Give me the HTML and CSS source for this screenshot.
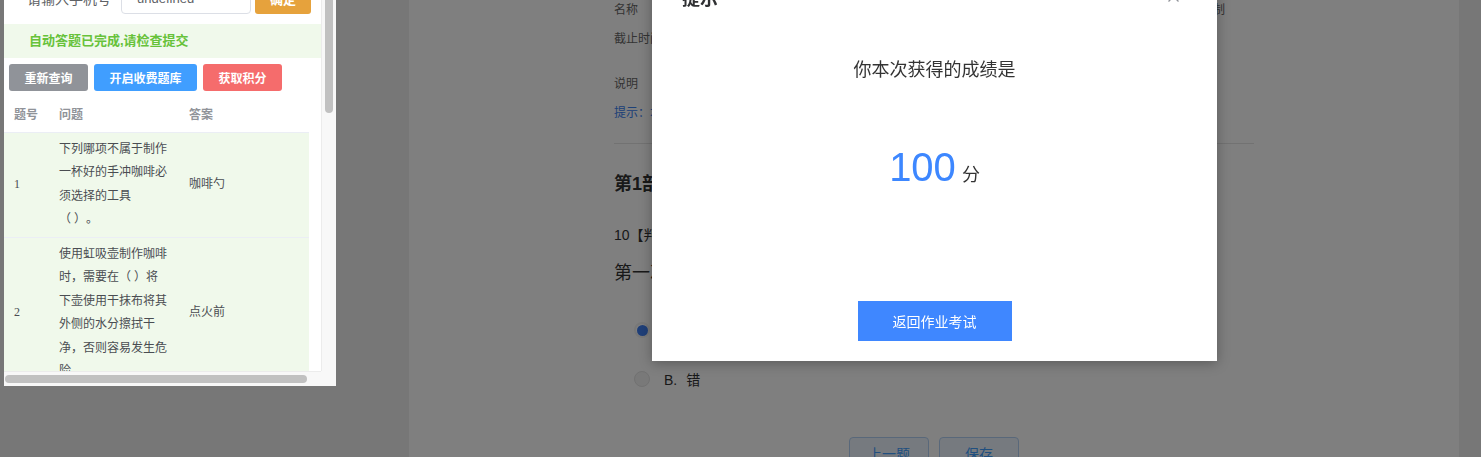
FILE: index.html
```html
<!DOCTYPE html>
<html lang="zh-CN">
<head>
<meta charset="utf-8">
<title>作业考试</title>
<link rel="stylesheet" href="styles.css">
</head>
<body>
<div class="page">
  <main class="sheet">
    <div class="content">
      <div class="info-row">
        <div class="info-left"><span class="k">名称</span><span class="v">咖啡制作基础</span></div>
        <span class="info-right">考试次数：不限制</span>
      </div>
      <div class="info-row row-gap1">
        <div class="info-left"><span class="k">截止时间</span><span class="v">2023-06-30 23:59</span></div>
      </div>
      <div class="info-row row-gap2">
        <div class="info-left"><span class="k">说明</span><span class="v">请认真作答</span></div>
      </div>
      <div class="tip">提示：本次考试共10题，提交后不可修改。</div>
      <hr class="divider">
      <h2 class="part">第1部分 判断题</h2>
      <div class="q-no">10【判断题】(10分)</div>
      <div class="q-title">第一次冲泡手冲咖啡前需要先温杯。</div>
      <div class="options">
        <div class="opt"><span class="radio checked"></span><span class="opt-text"><span class="opt-key">A.</span>对</span></div>
        <div class="opt"><span class="radio"></span><span class="opt-text"><span class="opt-key">B.</span>错</span></div>
      </div>
      <div class="nav-btns">
        <button class="plain-btn">上一题</button>
        <button class="plain-btn">保存</button>
      </div>
    </div>
  </main>
</div>

<div class="mask"></div>

<aside class="helper">
  <div class="helper-body">
    <div class="phone-row">
      <span class="phone-label">请输入手机号</span>
      <input class="phone-input" value="undefined">
      <button class="btn btn-warning">确定</button>
    </div>
    <div class="alert">自动答题已完成,请检查提交</div>
    <div class="btn-row">
      <button class="btn btn-info">重新查询</button>
      <button class="btn btn-primary">开启收费题库</button>
      <button class="btn btn-danger">获取积分</button>
    </div>
    <table class="qa">
      <colgroup><col class="c1"><col class="c2"><col class="c3"></colgroup>
      <thead>
        <tr><th>题号</th><th>问题</th><th>答案</th></tr>
      </thead>
      <tbody>
        <tr><td>1</td><td>下列哪项不属于制作一杯好的手冲咖啡必须选择的工具（&nbsp;）。</td><td>咖啡勺</td></tr>
        <tr><td>2</td><td>使用虹吸壶制作咖啡时，需要在（&nbsp;）将下壶使用干抹布将其外侧的水分擦拭干净，否则容易发生危险。</td><td>点火前</td></tr>
        <tr><td>3</td><td>意式浓缩咖啡的萃取时间一般为（&nbsp;）。</td><td>25-30秒</td></tr>
      </tbody>
    </table>
  </div>
  <div class="vtrack"><div class="vthumb"></div></div>
  <div class="htrack"><div class="hthumb"></div></div>
  <div class="corner"></div>
</aside>

<section class="dialog">
  <header class="dialog-head">
    <span class="dialog-title">提示</span>
    <svg class="dialog-close" width="11" height="11" viewBox="0 0 11 11"><path d="M0.5 0.5 L10.5 10.5 M10.5 0.5 L0.5 10.5" stroke="#909399" stroke-width="1.3" fill="none"/></svg>
  </header>
  <p class="dialog-text">你本次获得的成绩是</p>
  <div class="score"><span class="score-num">100</span><span class="score-unit">分</span></div>
  <div class="dialog-foot"><button class="back-btn">返回作业考试</button></div>
</section>
</body>
</html>
```

FILE: styles.css
```css
* { box-sizing: border-box; text-spacing-trim: space-all; }
html, body { margin: 0; padding: 0; }
body {
  width: 1481px;
  height: 457px;
  overflow: hidden;
  background: #eeeeee;
  font-family: "Liberation Sans", "Noto Sans CJK SC", sans-serif;
}
button { font-family: inherit; border: 0; cursor: pointer; }

/* underlying page */
.page { display: flex; height: 457px; }
.sheet {
  margin-left: 409px;
  width: 1050px;
  height: 100%;
  background: #ffffff;
  padding-left: 205px;
}
.content { width: 640px; }
.info-row {
  display: flex;
  justify-content: space-between;
  line-height: 20px;
  font-size: 12px;
  color: #666;
  padding-right: 29px;
}
.row-gap1 { margin-top: 9px; }
.row-gap2 { margin-top: 25px; }
.info-left { display: flex; }
.k { width: 60px; }
.v { color: #333; }
.info-right { color: #666; }
.tip { margin-top: 9px; line-height: 20px; font-size: 12px; color: #3a82f0; }
.divider { margin: 20px 0 0; border: 0; border-top: 1px solid #e4e4e4; height: 0; }
.part { margin: 28px 0 0; font-size: 18px; line-height: 24px; font-weight: bold; color: #333; }
.q-no { margin-top: 29px; font-size: 14px; line-height: 20px; color: #333; }
.q-title { margin-top: 16px; font-size: 18px; line-height: 24px; color: #333; }
.options { margin-top: 30px; padding-left: 20px; display: flex; flex-direction: column; gap: 19px; }
.opt { display: flex; align-items: center; height: 30px; font-size: 14px; color: #333; }
.radio {
  width: 16px; height: 16px; border-radius: 50%;
  border: 1px solid #e2e2e2; background: #f2f2f2;
  display: flex; align-items: center; justify-content: center;
}
.radio.checked { border: 2px solid #f0f0f0; background: #ffffff; }
.radio.checked::after { content: ""; width: 11px; height: 11px; border-radius: 50%; background: #3f7ef0; }
.opt-text { margin-left: 14px; }
.opt-key { margin-right: 9px; }
.nav-btns { margin-top: 43px; display: flex; justify-content: center; gap: 10px; }
.plain-btn {
  width: 80px; height: 32px; border-radius: 4px;
  background: #ecf5ff; border: 1px solid #b3d0f5; color: #409eff; font-size: 14px;
}

/* overlay */
.mask { position: fixed; inset: 0; background: rgba(0, 0, 0, 0.5); }

/* helper panel */
.helper {
  position: fixed;
  left: 4px;
  top: -18px;
  width: 332px;
  height: 404px;
  background: #ffffff;
  display: grid;
  grid-template-columns: 317px 15px;
  grid-template-rows: 389px 15px;
}
.helper-body { overflow: hidden; }
.phone-row { display: flex; align-items: center; height: 32px; padding-left: 23px; }
.phone-label { width: 94px; font-size: 14px; color: #606266; }
.phone-input {
  width: 130px; height: 32px; border: 1px solid #dcdfe6; border-radius: 4px;
  padding: 0 15px; font-size: 13px; color: #606266; font-family: inherit; outline: none;
}
.btn { color: #fff; border-radius: 3px; font-size: 12px; font-weight: bold; }
.btn-warning { margin-left: 4px; width: 56px; height: 32px; background: #e6a23c; font-size: 13px; }
.alert {
  margin-top: 10px; height: 34px; line-height: 34px; padding-left: 25px;
  background: #f0f9eb; color: #67c23a; font-size: 13px; font-weight: bold;
}
.btn-row { margin-top: 6px; display: flex; gap: 6px; padding-left: 5px; }
.btn-row .btn { height: 27px; }
.btn-info { width: 79px; background: #909399; }
.btn-primary { width: 103px; background: #409eff; }
.btn-danger { width: 79px; background: #f56c6c; }

.qa { margin-top: 5px; width: 305px; table-layout: fixed; border-collapse: collapse; }
.c1 { width: 45px; }
.c2 { width: 130px; }
.c3 { width: 130px; }
.qa th {
  height: 36px; padding: 0 10px; text-align: left; vertical-align: middle;
  font-size: 12px; font-weight: bold; color: #909399; border-bottom: 1px solid #ebeef5;
}
.qa td {
  padding: 5px 10px; line-height: 23.5px; vertical-align: middle;
  font-family: "Liberation Serif", "Noto Sans CJK SC", serif;
  font-size: 12px; color: #4a4d52; background: #f0f9eb; border-bottom: 1px solid #ebeef5;
}

.vtrack { background: #f8f8f8; border-left: 1px solid #ececec; padding: 2px 3px 0; }
.vthumb { width: 8px; height: 129px; border-radius: 4px; background: #c1c1c1; }
.htrack { background: #f8f8f8; border-top: 1px solid #ececec; padding: 3px 0 0 1px; }
.hthumb { width: 302px; height: 8px; border-radius: 4px; background: #c1c1c1; }
.corner { background: #f8f8f8; }

/* dialog */
.dialog {
  position: fixed;
  left: 652px;
  top: -30px;
  width: 565px;
  background: #ffffff;
  box-shadow: 0 2px 12px rgba(0, 0, 0, 0.3);
  padding-bottom: 20px;
}
.dialog-head { display: flex; justify-content: space-between; align-items: flex-start; padding: 20px 38px 0 30px; }
.dialog-title { font-size: 18px; line-height: 18px; font-weight: bold; color: #303133; }
.dialog-close { margin-top: 1px; }
.dialog-text { margin: 50px 0 0; text-align: center; font-size: 18px; line-height: 24px; color: #333; }
.score { margin-top: 61px; display: flex; justify-content: center; align-items: baseline; gap: 6px; }
.score-num { font-size: 40px; line-height: 48px; color: #3d87ff; }
.score-unit { font-size: 18px; color: #333; }
.dialog-foot { margin-top: 110px; display: flex; justify-content: center; }
.back-btn { width: 154px; height: 40px; background: #3f87ff; color: #fff; font-size: 14px; }
```
